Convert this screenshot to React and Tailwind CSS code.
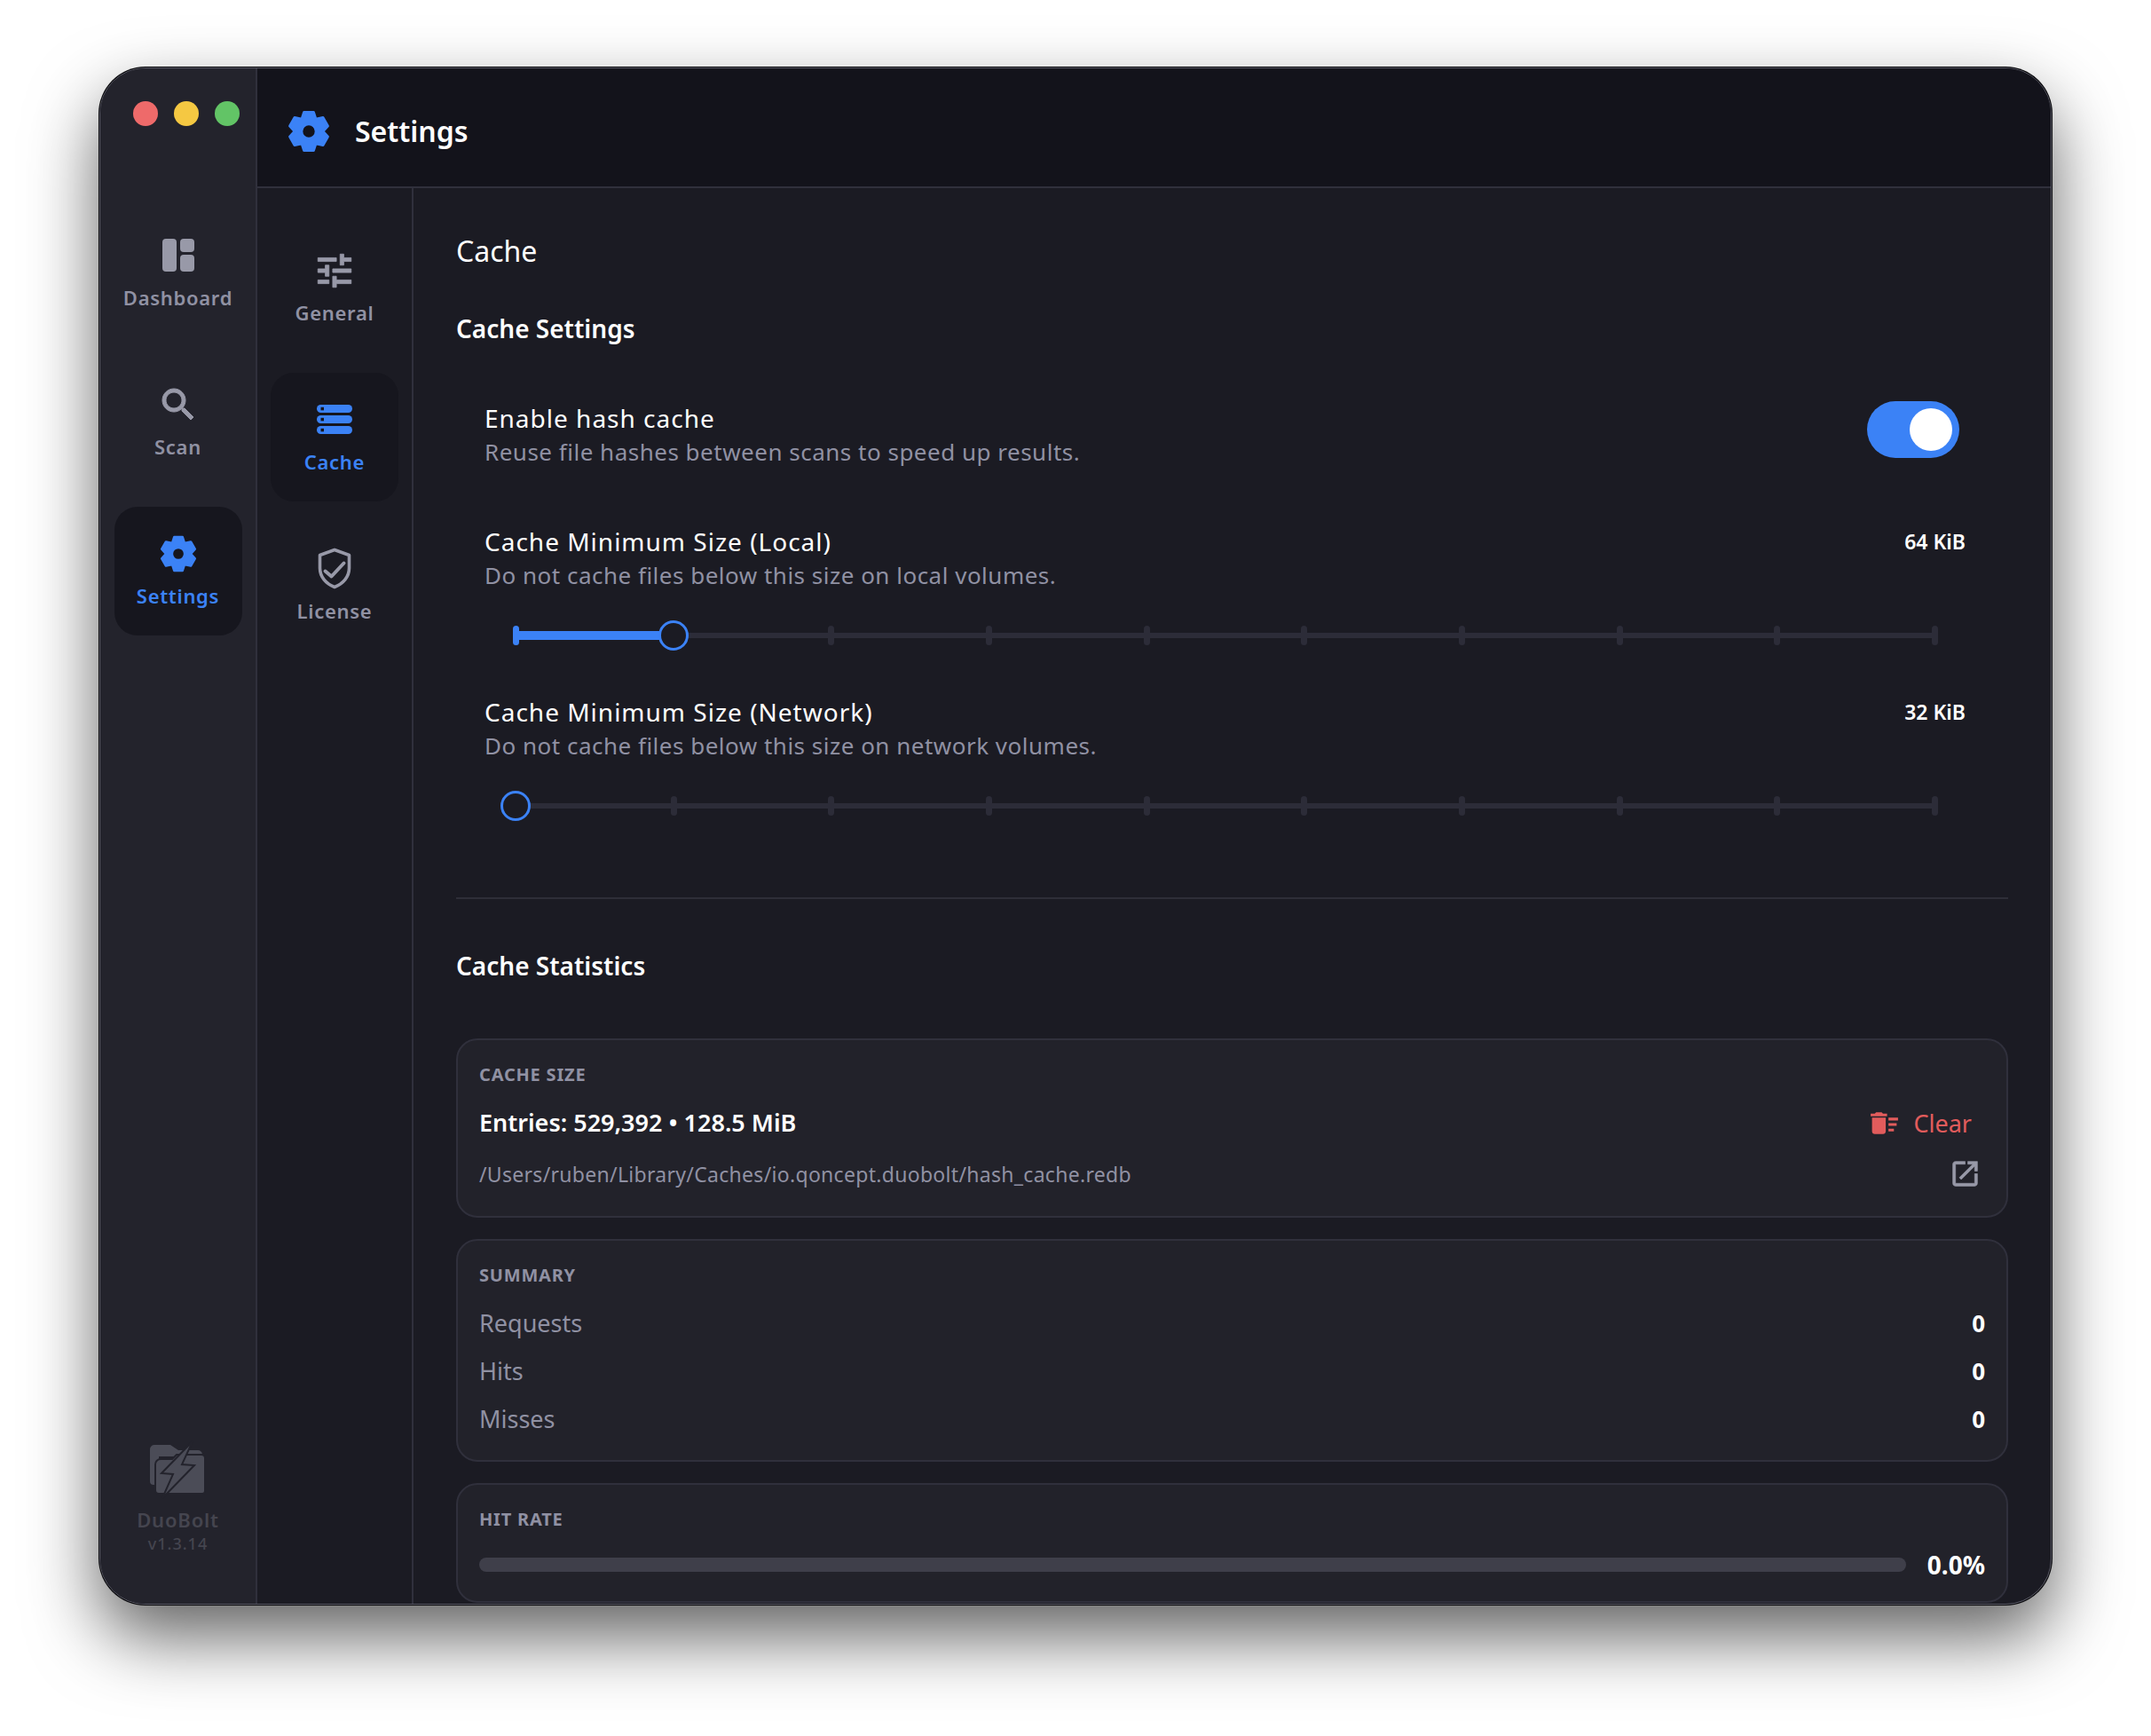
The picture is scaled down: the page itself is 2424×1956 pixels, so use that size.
import { MdDeleteSweep } from 'react-icons/md';

const font = { fontFamily: '"Noto Sans", sans-serif' };

// six chunky teeth, rounded off by the stroke join
function gearPath() {
  const pts = [];
  for (let i = 0; i < 6; i++) {
    const a = (i * Math.PI) / 3;
    [[7.6, 14.8], [5.4, 21.6], [-5.4, 21.6], [-7.6, 14.8]].forEach(([x, y]) => {
      pts.push([24 + x * Math.cos(a) - y * Math.sin(a), 24 + x * Math.sin(a) + y * Math.cos(a)]);
    });
  }
  const body = 'M' + pts.map(p => p.map(n => n.toFixed(2)).join(' ')).join('L') + 'Z';
  const hole = 'M32.2 24a8.2 8.2 0 1 0-16.400 0a8.2 8.2 0 1 0 16.400 0Z';
  return body + hole;
}

function Gear({ className }) {
  return (
    <svg viewBox="0 0 48 48" className={className}>
      <path d={gearPath()} fill="#3b82f6" fillRule="evenodd" stroke="#3b82f6" strokeWidth="3" strokeLinejoin="round" />
    </svg>
  );
}

// material glyph, thickened a little with a stroke
function Glyph({ d, weight, className }) {
  return (
    <svg viewBox="0 0 24 24" className={className}>
      <path d={d} fill="#9899a8" stroke="#9899a8" strokeWidth={weight} />
    </svg>
  );
}

const searchPath = 'M15.5 14h-.79l-.28-.27C15.41 12.59 16 11.11 16 9.500 16 5.910 13.090 3 9.500 3S3 5.910 3 9.500 5.910 16 9.500 16c1.610 0 3.090-.59 4.230-1.570l.27.28v.79l5 4.990L20.490 19l-4.990-5zm-6 0C7.010 14 5 11.990 5 9.500S7.010 5 9.500 5 14 7.010 14 9.500 11.990 14 9.500 14z';
const tunePath = 'M3 17v2h6v-2H3zM3 5v2h10V5H3zm10 16v-2h8v-2h-8v-2h-2v6h2zM7 9v2H3v2h4v2h2V9H7zm14 4v-2H11v2h10zm-6-4h2V7h4V5h-4V3h-2v6z';
const openPath = 'M19 19H5V5h7V3H5c-1.110 0-2 .9-2 2v14c0 1.100.89 2 2 2h14c1.100 0 2-.9 2-2v-7h-2v7zM14 3v2h3.590l-9.830 9.830 1.410 1.410L19 6.410V10h2V3h-7z';

function DashboardIcon() {
  return (
    <svg viewBox="0 0 36 37" className="w-9 h-[37px]" fill="#9899a8">
      <rect x="0" y="0" width="16" height="37" rx="4" />
      <rect x="20" y="0" width="16" height="15" rx="4" />
      <rect x="20" y="18" width="16" height="19" rx="4" />
    </svg>
  );
}

function StorageIcon() {
  return (
    <svg viewBox="0 0 40 33" className="w-10 h-[33px]">
      {[0, 12, 24].map(y => (
        <g key={y}>
          <rect x="0" y={y} width="40" height="9" rx="4.5" fill="#3b82f6" />
          <rect x="4.5" y={y + 2.8} width="3.5" height="3.5" fill="#16161e" />
        </g>
      ))}
    </svg>
  );
}

function ShieldIcon() {
  return (
    <svg viewBox="0 0 40 47" className="w-10 h-[47px]" fill="none" stroke="#9899a8" strokeLinejoin="round" strokeLinecap="round">
      <path d="M20 2.500 36.500 8.500V23C36.500 33 29.500 41 20 44.500 10.500 41 3.500 33 3.500 23V8.500Z" strokeWidth="3.600" />
      <path d="M9.500 26.500 16.500 32.500 30.500 17.500" strokeWidth="4" />
    </svg>
  );
}

function Logo() {
  return (
    <svg viewBox="0 0 80 75" className="w-20 h-[75px]">
      <path d="M9 13a5 5 0 0 1 5-5h18l9 6h22a5 5 0 0 1 5 5v2H9Z M9 13h10v40h-6a4 4 0 0 1-4-4Z" fill="#4b4c57" />
      <path d="M15 30a6 6 0 0 1 6-6h13l5-5h28a4 4 0 0 1 4 4v37a3 3 0 0 1-3 3H19a4 4 0 0 1-4-4Z" fill="#4b4c57" stroke="#23232c" strokeWidth="2" />
      <path d="M57 4 22 40 35 41 23 68 59 31 45 30Z" fill="#4b4c57" stroke="#23232c" strokeWidth="2" strokeLinejoin="miter" />
    </svg>
  );
}

function NavItem({ icon, label, active }) {
  return (
    <div className={`w-[144px] h-[145px] rounded-[26px] flex flex-col items-center ${active ? 'bg-[#16161e]' : ''}`}>
      <div className="h-[105px] flex items-center justify-center">{icon}</div>
      <span className={`-mt-[20px] text-[22px] leading-[30px] tracking-[0.7px] font-semibold ${active ? 'text-[#3b82f6]' : 'text-[#9091a3]'}`}>
        {label}
      </span>
    </div>
  );
}

function Slider({ value }) {
  return (
    <div className="ml-[35px] mr-[82px] h-[34px] relative flex items-center">
      <div className="absolute left-0 right-0 h-[6px] bg-[#2c2c38]" />
      <div className="relative w-full flex justify-between">
        {Array.from({ length: 10 }).map((_, i) => (
          <div key={i} className={`w-[7px] h-[22px] rounded-full -mx-[3px] ${i < value ? 'bg-[#3b82f6]' : 'bg-[#2c2c38]'}`} />
        ))}
      </div>
      {value > 0 && (
        <div className="absolute left-0 h-[10px] bg-[#3b82f6]" style={{ width: `${(value * 100) / 9}%` }} />
      )}
      <div
        className="absolute w-[34px] h-[34px] -ml-[17px] rounded-full border-[3px] border-[#3b82f6] bg-[#1b1b23]"
        style={{ left: `${(value * 100) / 9}%` }}
      />
    </div>
  );
}

function SettingText({ title, desc, value }) {
  return (
    <div className="flex items-start justify-between">
      <div>
        <div className="text-[28px] leading-[38px] tracking-[1px] text-white">{title}</div>
        <div className="text-[26px] leading-[38px] tracking-[0.5px] text-[#9091a3]">{desc}</div>
      </div>
      {value && <span className="mr-[48px] text-[23px] leading-[38px] font-semibold text-white">{value}</span>}
    </div>
  );
}

function Card({ children, className = '' }) {
  return (
    <div className={`rounded-[24px] border-2 border-[#30303c] bg-[#22222a] px-[24px] pt-[25px] ${className}`}>
      {children}
    </div>
  );
}

function CardLabel({ children }) {
  return <div className="text-[20px] leading-[28px] font-bold tracking-[0.8px] text-[#9091a3]">{children}</div>;
}

function StatRow({ label, value }) {
  return (
    <div className="flex items-center justify-between h-[54px]">
      <span className="text-[27px] text-[#9091a3]">{label}</span>
      <span className="text-[26px] font-bold text-white">{value}</span>
    </div>
  );
}

export default function App() {
  return (
    <div className="w-[2424px] h-[1956px] bg-white pl-[112px] pt-[76px] overflow-hidden" style={font}>
      <div className="w-[2200px] h-[1732px] rounded-[52px] overflow-hidden flex border border-[#5a5a66] bg-[#1b1b23] shadow-[0_0_0_1px_#0a0a0d,0_36px_80px_rgba(0,0,0,0.62)]">
        {/* app sidebar */}
        <aside className="w-[177px] shrink-0 flex flex-col items-center bg-[#23232c] border-r-2 border-[#30303c]">
          <div className="w-full pt-[37px] pl-[37px] flex gap-[18px]">
            <span className="w-[28px] h-[28px] rounded-full bg-[#ee6a6a]" />
            <span className="w-[28px] h-[28px] rounded-full bg-[#f5c842]" />
            <span className="w-[28px] h-[28px] rounded-full bg-[#62c466]" />
          </div>
          <nav className="mt-[93px] flex flex-col gap-[23px]">
            <NavItem icon={<DashboardIcon />} label="Dashboard" />
            <NavItem icon={<Glyph d={searchPath} weight={0.5} className="w-12 h-12" />} label="Scan" />
            <NavItem icon={<Gear className="w-[42px] h-[42px]" />} label="Settings" active />
          </nav>
          <div className="mt-auto pb-[56px] flex flex-col items-center">
            <Logo />
            <span className="mt-[2px] text-[22px] leading-[30px] tracking-[0.8px] font-semibold text-[#45454f]">DuoBolt</span>
            <span className="text-[18px] leading-[24px] tracking-[1px] font-medium text-[#45454f]">v1.3.14</span>
          </div>
        </aside>

        <div className="flex-1 min-w-0 flex flex-col">
          <header className="h-[135px] shrink-0 bg-[#13131b] border-b-2 border-[#30303c] flex items-center pl-[34px] pt-[8px] gap-[28px]">
            <Gear className="w-[48px] h-[48px]" />
            <h1 className="text-[32px] font-semibold text-white">Settings</h1>
          </header>

          <div className="flex-1 min-h-0 flex">
            {/* settings tabs */}
            <aside className="w-[176px] shrink-0 border-r-2 border-[#30303c] pt-[40px] flex flex-col items-center gap-[23px]">
              <NavItem icon={<Glyph d={tunePath} weight={0.4} className="w-[50px] h-[50px]" />} label="General" />
              <NavItem icon={<StorageIcon />} label="Cache" active />
              <NavItem icon={<ShieldIcon />} label="License" />
            </aside>

            <main className="flex-1 min-w-0 overflow-hidden pl-[48px] pr-[48px]">
              <h2 className="mt-[49px] text-[32px] leading-[44px] text-white">Cache</h2>
              <h3 className="mt-[45px] text-[28px] leading-[40px] font-semibold text-white">Cache Settings</h3>

              <div className="mt-[62px] pl-[32px]">
                <div className="flex items-start justify-between">
                  <SettingText title="Enable hash cache" desc="Reuse file hashes between scans to speed up results." />
                  <div className="mr-[55px] w-[104px] h-[64px] rounded-full bg-[#3b82f6] flex items-center justify-end pr-[8px]">
                    <div className="w-[48px] h-[48px] rounded-full bg-white" />
                  </div>
                </div>
                <div className="mt-[63px]">
                  <SettingText
                    title="Cache Minimum Size (Local)"
                    desc="Do not cache files below this size on local volumes."
                    value="64 KiB"
                  />
                  <div className="mt-[32px]"><Slider value={1} /></div>
                </div>
                <div className="mt-[50px]">
                  <SettingText
                    title="Cache Minimum Size (Network)"
                    desc="Do not cache files below this size on network volumes."
                    value="32 KiB"
                  />
                  <div className="mt-[32px]"><Slider value={0} /></div>
                </div>
              </div>

              <div className="mt-[86px] h-[2px] bg-[#2e2e38]" />
              <h3 className="mt-[55px] text-[28px] leading-[40px] font-semibold text-white">Cache Statistics</h3>

              <div className="mt-[62px] flex flex-col gap-[24px]">
                <Card className="h-[202px]">
                  <CardLabel>CACHE SIZE</CardLabel>
                  <div className="mt-[22px] flex items-center justify-between h-[36px]">
                    <span className="text-[27px] font-semibold text-white">Entries: 529,392 • 128.5 MiB</span>
                    <button className="mr-[15px] flex items-center gap-[14px] text-[27px] text-[#e25c5c]">
                      <MdDeleteSweep className="w-[37px] h-[37px]" />
                      <span className="mt-[3px]">Clear</span>
                    </button>
                  </div>
                  <div className="mt-[23px] flex items-center justify-between h-[34px]">
                    <span className="text-[23px] tracking-[0.3px] text-[#9091a3]">/Users/ruben/Library/Caches/io.qoncept.duobolt/hash_cache.redb</span>
                    <Glyph d={openPath} weight={0.4} className="mr-[4px] -mt-[2px] w-[37px] h-[37px]" />
                  </div>
                </Card>
                <Card className="h-[251px]">
                  <CardLabel>SUMMARY</CardLabel>
                  <div className="mt-[13px]">
                    <StatRow label="Requests" value="0" />
                    <StatRow label="Hits" value="0" />
                    <StatRow label="Misses" value="0" />
                  </div>
                </Card>
                <Card className="h-[135px]">
                  <CardLabel>HIT RATE</CardLabel>
                  <div className="mt-[17px] flex items-center gap-[24px] h-[40px]">
                    <div className="flex-1 h-[16px] rounded-full bg-[#3f3f4a]" />
                    <span className="text-[28px] font-bold text-white">0.0%</span>
                  </div>
                </Card>
              </div>
            </main>
          </div>
        </div>
      </div>
    </div>
  );
}
